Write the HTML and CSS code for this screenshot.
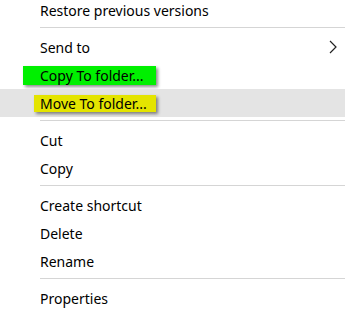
FILE: index.html
```html
<!DOCTYPE html>
<html lang="en">
<head>
    <meta charset="UTF-8">
    <title>Context menu</title>
    <link rel="stylesheet" href="styles.css">
</head>
<body>
    <div class="menu">
        <div class="item">Restore previous versions</div>
        <div class="sep"></div>
        <div class="item sub">Send to
            <svg class="arrow" width="8" height="14" viewBox="0 0 8 14"><path d="M1 1 L7 7 L1 13" fill="none" stroke="#222" stroke-width="1.2"/></svg>
        </div>
        <div class="item"><span class="mark green">Copy To folder...</span></div>
        <div class="item hover"><span class="mark yellow">Move To folder...</span></div>
        <div class="sep"></div>
        <div class="item">Cut</div>
        <div class="item">Copy</div>
        <div class="sep"></div>
        <div class="item">Create shortcut</div>
        <div class="item">Delete</div>
        <div class="item">Rename</div>
        <div class="sep"></div>
        <div class="item">Properties</div>
    </div>
</body>
</html>
```
FILE: styles.css
```css
body {
    margin: 0;
    background: #fff;
    font-family: "Noto Sans", "Open Sans", sans-serif;
    font-size: 14px;
    color: #000;
    overflow: hidden;
}
.menu {
    margin-top: -4px;
}
.item {
    height: 28px;
    box-sizing: border-box;
    padding: 2px 0 0 40px;
    line-height: 26px;
    position: relative;
}
.item.hover {
    background-color: #e4e4e4;
}
.sep {
    margin: 3px 0 0 40px;
    height: 6px;
    border-top: 1px solid #d5d5d5;
    box-sizing: border-box;
}
.arrow {
    position: absolute;
    right: 8px;
    top: 7px;
}
.mark {
    display: inline-block;
    line-height: 17px;
    box-shadow: 2px 2px 3px rgba(0, 0, 0, 0.45);
}
.green {
    background-color: #00f000;
    margin-left: -17px;
    padding: 1px 12px 1px 17px;
}
.yellow {
    background-color: #e4e400;
    margin-left: -6px;
    padding: 0 9px 0 6px;
}
```
